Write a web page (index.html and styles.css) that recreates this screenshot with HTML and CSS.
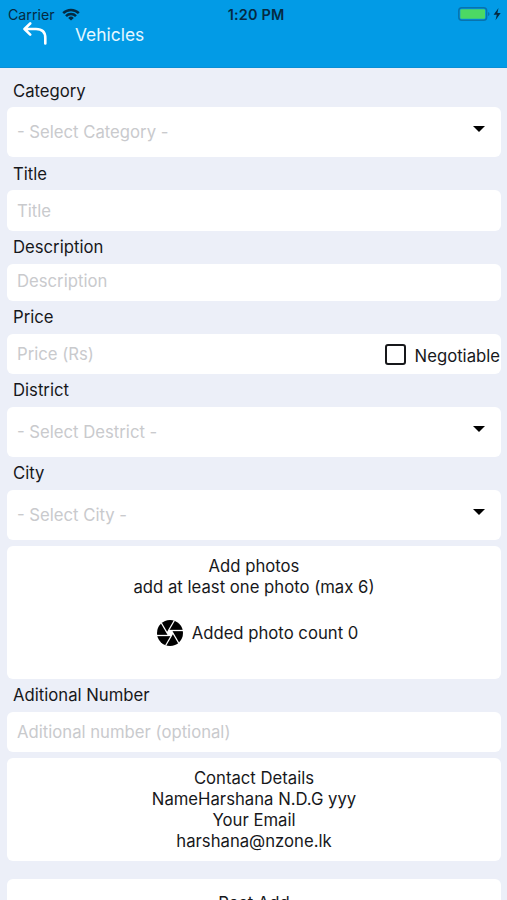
FILE: index.html
```html
<!DOCTYPE html>
<html lang="en">
<head>
<meta charset="utf-8">
<title>Vehicles</title>
<link rel="stylesheet" href="styles.css">
</head>
<body>
<header class="header">
  <div class="status">
    <div class="status-left">
      <span>Carrier</span>
      <svg class="wifi" viewBox="0 0 18 13"><g fill="none" stroke="#052a42" stroke-width="2.5"><path d="M1.2 5.2a11 11 0 0 1 15.6 0"/><path d="M4 8.1a7 7 0 0 1 10 0"/></g><path d="M9 12.6 6.2 9.9a4 4 0 0 1 5.6 0z" fill="#052a42"/></svg>
    </div>
    <span class="time">1:20 PM</span>
    <div class="status-right">
      <svg class="battery" viewBox="0 0 44 14"><rect x=".8" y=".8" width="27.8" height="12.4" rx="3" fill="none" stroke="#0873ad" stroke-width="1.5"/><rect x="2.3" y="2.3" width="24.8" height="9.4" rx="1.2" fill="#4cd964"/><path d="M30 5q1.6.4 1.6 2T30 9z" fill="#0873ad"/><path d="M40.5 1 35.6 7.8h3.2l-1.3 5.4 5.2-7.2h-3.3z" fill="#052a42"/></svg>
    </div>
  </div>
  <div class="nav">
    <svg class="back" viewBox="0 0 26 24"><path d="M8.2 1.5 2.5 7l5.7 5.6M3 7h11q9.3 0 9.3 9v5.5" fill="none" stroke="#fff" stroke-width="2.6" stroke-linecap="round" stroke-linejoin="round"/></svg>
    <h1 class="title">Vehicles</h1>
  </div>
</header>
<main class="form">
  <div class="label">Category</div>
  <div class="field select"><span>- Select Category -</span><i class="caret"></i></div>
  <div class="label">Title</div>
  <div class="field"><span>Title</span></div>
  <div class="label">Description</div>
  <div class="field short"><span>Description</span></div>
  <div class="label">Price</div>
  <div class="field price"><span>Price (Rs)</span><div class="check"><i class="box"></i><span>Negotiable</span></div></div>
  <div class="label">District</div>
  <div class="field select"><span>- Select Destrict -</span><i class="caret"></i></div>
  <div class="label">City</div>
  <div class="field select"><span>- Select City -</span><i class="caret"></i></div>
  <section class="card photos">
    <p>Add photos</p>
    <p>add at least one photo (max 6)</p>
    <div class="count">
      <svg class="shutter" viewBox="0 0 26 26"><circle cx="13" cy="13" r="13"/><g stroke="#fff" stroke-width="1.3"><path d="M11.5 10.5H26"/><path d="M11.5 10.5H26" transform="rotate(60 13 13)"/><path d="M11.5 10.5H26" transform="rotate(120 13 13)"/><path d="M11.5 10.5H26" transform="rotate(180 13 13)"/><path d="M11.5 10.5H26" transform="rotate(240 13 13)"/><path d="M11.5 10.5H26" transform="rotate(300 13 13)"/></g><path d="M11.5 10.4h3l1.5 2.6-1.5 2.6h-3L10 13z" fill="#fff"/></svg>
      <span>Added photo count 0</span>
    </div>
  </section>
  <div class="label">Aditional Number</div>
  <div class="field"><span>Aditional number (optional)</span></div>
  <section class="card contact">
    <p>Contact Details</p>
    <p>NameHarshana N.D.G yyy</p>
    <p>Your Email</p>
    <p>harshana@nzone.lk</p>
  </section>
  <section class="card post"><p>Post Add</p></section>
</main>
</body>
</html>
```
FILE: styles.css
```css
* { box-sizing: border-box; }
body {
  margin: 0;
  height: 900px;
  overflow: hidden;
  background: #eceff8;
  color: #17181b;
  font: 16.7px/21px Inter, "Liberation Sans", sans-serif;
}
p, h1 { margin: 0; }
.header {
  height: 68px;
  background: #029be6;
  border-bottom: 1px solid #0a8fd6;
}
.status {
  display: grid;
  grid-template-columns: 1fr auto 1fr;
  align-items: center;
  height: 22px;
  padding: 5px 5px 0 8px;
  font-size: 14.2px;
  line-height: 17px;
  color: #052a42;
}
.status-left { display: flex; align-items: center; gap: 7px; }
.wifi { width: 18px; height: 13px; }
.time { padding: 1px 0 0 2px; font-size: 14.4px; font-weight: 600; letter-spacing: .2px; }
.status-right { display: flex; justify-content: flex-end; }
.battery { width: 44px; height: 14px; }
.nav { display: flex; padding-left: 22px; }
.back { width: 26px; height: 24px; }
.title {
  margin: 2px 0 0 27px;
  font-size: 17.4px;
  font-weight: 400;
  line-height: 22px;
  color: #e6f7ff;
}
.form { padding: 6.4px 6px 0 7px; }
.label {
  height: 33px;
  padding: 6.5px 6px 0;
}
.field {
  display: flex;
  align-items: center;
  height: 40.1px;
  padding: 1px 10px 0;
  border-radius: 6px;
  background: #fff;
  color: #c9cacd;
}
.field.select { height: 50.1px; justify-content: space-between; }
.field.short { height: 37px; padding-bottom: 3px; }
.field.price { justify-content: space-between; padding-right: 1px; }
.caret {
  margin: 0 6px 7px 0;
  border: 6.5px solid transparent;
  border-top-color: #000;
  border-bottom: 0;
}
.check { display: flex; align-items: center; gap: 9px; color: #17181b; }
.check span { padding-top: 5px; }
.box { width: 21px; height: 21px; border: 2px solid #17181b; border-radius: 3px; }
.card {
  border-radius: 6px;
  background: #fff;
  text-align: center;
}
.photos { height: 133px; margin-top: 6px; padding-top: 10.3px; }
.count {
  display: flex;
  justify-content: center;
  align-items: center;
  gap: 9px;
  margin-top: 22px;
  padding-left: 7px;
}
.count span { padding-top: 1px; }
.shutter { width: 26px; height: 26px; }
.contact { height: 103px; margin-top: 6px; padding-top: 10.3px; }
.post { height: 50px; margin-top: 18.2px; padding-top: 14px; }
```
